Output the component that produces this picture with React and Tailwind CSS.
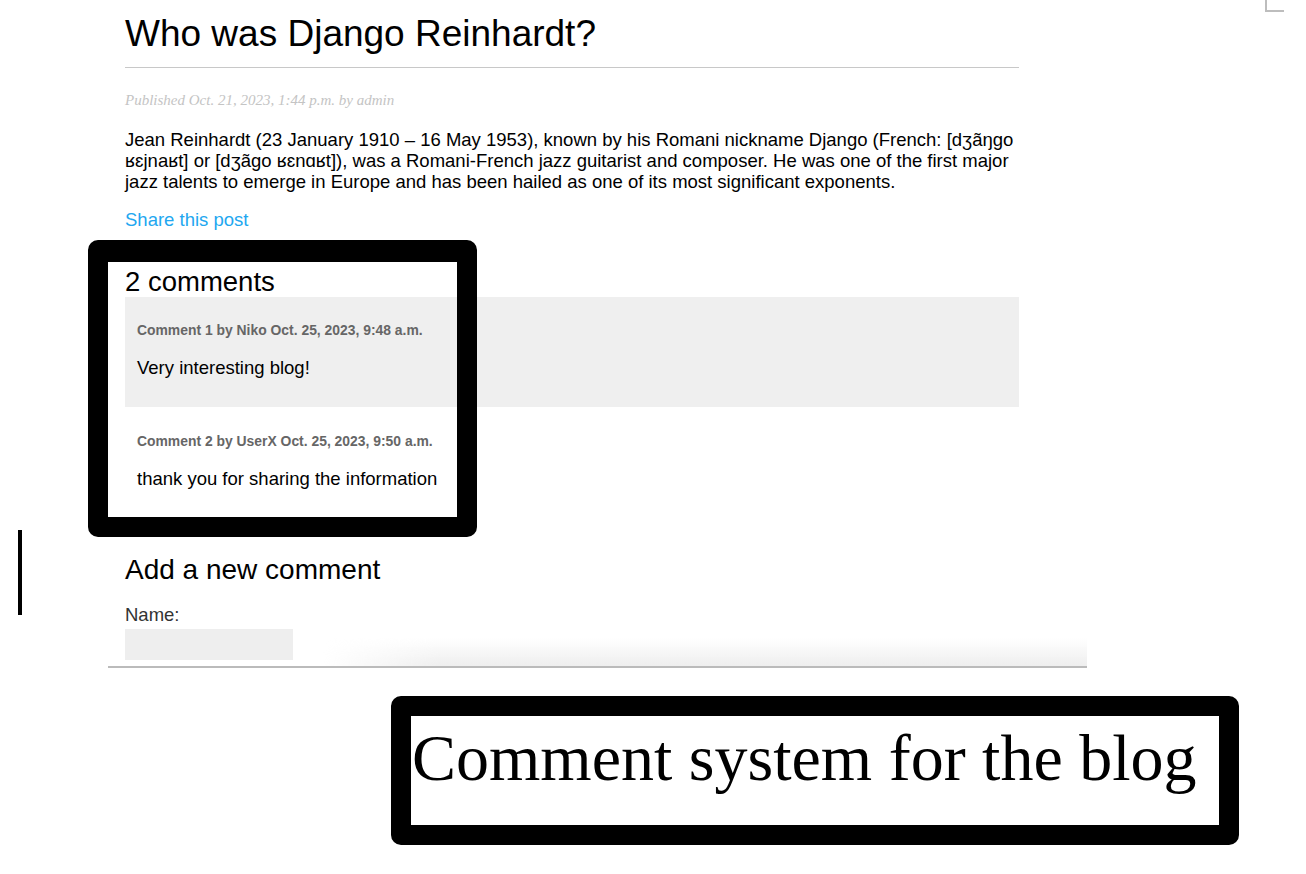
export default function App() {
  const sans = { fontFamily: '"Liberation Sans", Arial, Helvetica, sans-serif' };
  return (
    <div className="relative w-[1306px] h-[874px] bg-white overflow-hidden" style={sans}>
      {/* blog screenshot */}
      <div className="relative ml-[108px] w-[979px] h-[668px] border-b-2 border-[#bbbbbb] overflow-hidden">
        <div className="pl-[17px] pt-[13px] w-[911px]">
          <h1 className="text-[37px] leading-[42px] text-black pb-[12px] border-b border-[#c8c8c8] font-normal">
            Who was Django Reinhardt?
          </h1>
          <p
            className="mt-[24px] text-[15px] leading-[17px] italic text-[#c4c4c4]"
            style={{ fontFamily: '"Liberation Serif", Georgia, serif' }}
          >
            Published Oct. 21, 2023, 1:44 p.m. by admin
          </p>
          <p className="mt-[20px] text-[18.5px] leading-[21px] text-black">
            Jean Reinhardt (23 January 1910 – 16 May 1953), known by his Romani nickname Django (French: [dʒãŋgo
            ʁɛjnaʁt] or [dʒãgo ʁɛnɑʁt]), was a Romani-French jazz guitarist and composer. He was one of the first major
            jazz talents to emerge in Europe and has been hailed as one of its most significant exponents.
          </p>
          <p className="mt-[17px] text-[18.5px] leading-[21px] text-[#22a7f0]">Share this post</p>
          <h2 className="mt-[37px] text-[27.5px] leading-[30px] text-black font-normal">2 comments</h2>
          <div className="bg-[#efefef] h-[110px] px-[12px] pt-[25px]">
            <p className="text-[13.9px] leading-[16px] font-bold text-[#666666]">
              Comment 1 by Niko Oct. 25, 2023, 9:48 a.m.
            </p>
            <p className="mt-[19px] text-[18.5px] leading-[21px] text-black">Very interesting blog!</p>
          </div>
          <div className="h-[110px] px-[12px] pt-[26px]">
            <p className="text-[13.9px] leading-[16px] font-bold text-[#666666]">
              Comment 2 by UserX Oct. 25, 2023, 9:50 a.m.
            </p>
            <p className="mt-[19px] text-[18.5px] leading-[21px] text-black">thank you for sharing the information</p>
          </div>
          <h2 className="mt-[37px] text-[28px] leading-[32px] text-black font-normal">Add a new comment</h2>
          <p className="mt-[18px] text-[18.5px] leading-[21px] text-[#333333]">Name:</p>
          <div className="mt-[4px] w-[168px] h-[31px] bg-[#eeeeee]" />
        </div>
        {/* bottom shadow of the captured page */}
        <div className="absolute left-0 right-0 bottom-0 h-[28px] bg-gradient-to-t from-[#eeeeee] to-transparent [mask-image:linear-gradient(to_right,transparent_215px,black_330px)]" />
      </div>

      {/* caption */}
      <div className="mt-[28px] ml-[391px] w-[848px] h-[149px] border-[20px] border-black rounded-[10px] bg-white">
        <p
          className="pt-[5px] pl-[1px] text-[66px] leading-[73px] text-black whitespace-nowrap"
          style={{ fontFamily: '"Liberation Serif", "Times New Roman", serif' }}
        >
          Comment system for the blog
        </p>
      </div>

      {/* annotation frame around comments */}
      <div className="absolute left-[88px] top-[240px] w-[389px] h-[297px] border-[20px] border-t-[22px] border-black rounded-[10px] pointer-events-none" />

      {/* cursor bar */}
      <div className="absolute left-[18px] top-[530px] w-[4px] h-[85px] bg-black" />

      {/* crop mark top right */}
      <div className="absolute left-[1265px] top-0 w-[19px] h-[12px] border-l-2 border-b-2 border-[#bdbdbd]" />
    </div>
  );
}
